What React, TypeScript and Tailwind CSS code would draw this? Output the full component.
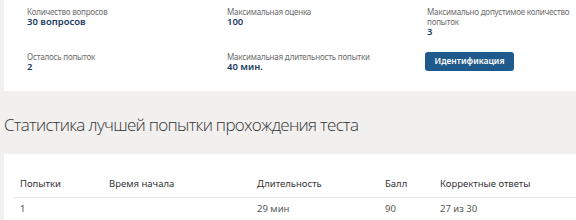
import React from "react";

const info = [
  { label: ["Количество вопросов"], value: "30 вопросов" },
  { label: ["Максимальная оценка"], value: "100" },
  { label: ["Максимально допустимое количество", "попыток"], value: "3" },
  { label: ["Осталось попыток"], value: "2" },
  { label: ["Максимальная длительность попытки"], value: "40 мин." },
];

const rows = [{ attempt: "1", start: "", duration: "29 мин", score: "90", correct: "27 из 30" }];

export default function App() {
  return (
    <div
      className="w-[576px] h-[220px] overflow-hidden bg-[#f1f0ef] pl-[4px]"
      style={{ fontFamily: '"Noto Sans", "Open Sans", sans-serif' }}
    >
      {/* Test info card */}
      <div className="bg-white h-[91px] pl-[23px] pt-[7px] grid grid-cols-[200px_200px_145px] grid-rows-[45px_auto]">
        {info.map((item) => (
          <div key={item.label[0]}>
            {item.label.map((line) => (
              <div key={line} className="text-[8px] tracking-[-0.2px] text-[#6b6b6b] leading-[10px] whitespace-nowrap">
                {line}
              </div>
            ))}
            <div className="text-[9.5px] font-semibold text-[#1b3a63] leading-[10px]">{item.value}</div>
          </div>
        ))}
        <div className="-mt-[6px] -ml-[2px]">
          <button className="h-[19px] w-[89px] rounded-[3px] bg-[#1f5a8d] text-white text-[8.5px] font-semibold">
            Идентификация
          </button>
        </div>
      </div>

      <h2
        className="text-[17px] font-light text-[#333] mt-[22px] leading-[24px] tracking-[-0.7px]"
        style={{ fontFamily: '"Open Sans", sans-serif' }}
      >
        Статистика лучшей попытки прохождения теста
      </h2>

      {/* Statistics table */}
      <div className="bg-white mt-[17px] h-[80px] px-[10px] pt-[23px]">
        <table className="table-fixed w-[562px] text-left text-[9.5px] text-[#333]">
          <thead>
            <tr className="border-b border-[#e8e8e8]">
              <th className="font-normal w-[95px] pl-[6px] pb-[6px]">Попытки</th>
              <th className="font-normal w-[148px] pb-[6px]">Время начала</th>
              <th className="font-normal w-[128px] pb-[6px]">Длительность</th>
              <th className="font-normal w-[55px] pb-[6px]">Балл</th>
              <th className="font-normal pb-[6px]">Корректные ответы</th>
            </tr>
          </thead>
          <tbody className="text-[#555]">
            {rows.map((r) => (
              <tr key={r.attempt}>
                <td className="pl-[6px] pt-[4px]">{r.attempt}</td>
                <td className="pt-[4px]">{r.start}</td>
                <td className="pt-[4px]">{r.duration}</td>
                <td className="pt-[4px]">{r.score}</td>
                <td className="pt-[4px]">{r.correct}</td>
              </tr>
            ))}
          </tbody>
        </table>
      </div>
    </div>
  );
}
